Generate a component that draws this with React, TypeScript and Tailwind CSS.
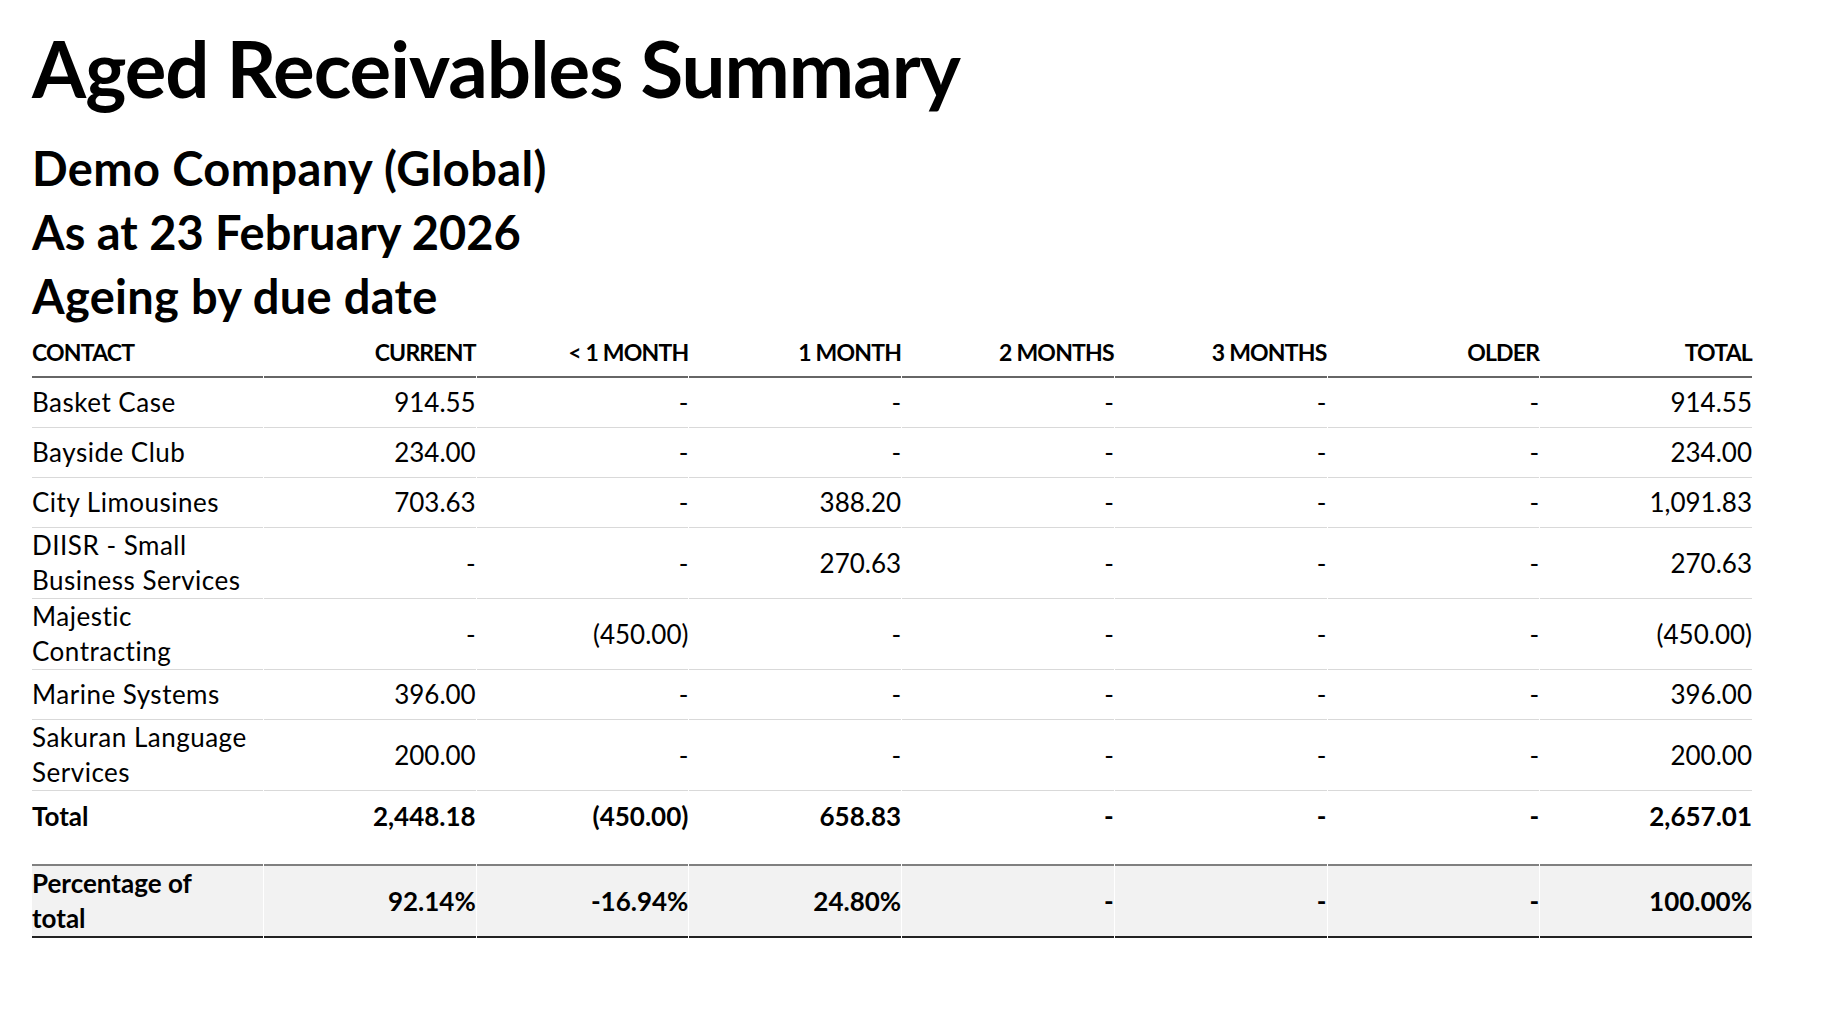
import React from 'react';

type Row = { contact: string[]; values: string[] };

const columns = ['Current', '< 1 Month', '1 Month', '2 Months', '3 Months', 'Older', 'Total'];

const rows: Row[] = [
  { contact: ['Basket Case'], values: ['914.55', '-', '-', '-', '-', '-', '914.55'] },
  { contact: ['Bayside Club'], values: ['234.00', '-', '-', '-', '-', '-', '234.00'] },
  { contact: ['City Limousines'], values: ['703.63', '-', '388.20', '-', '-', '-', '1,091.83'] },
  { contact: ['DIISR - Small', 'Business Services'], values: ['-', '-', '270.63', '-', '-', '-', '270.63'] },
  { contact: ['Majestic', 'Contracting'], values: ['-', '(450.00)', '-', '-', '-', '-', '(450.00)'] },
  { contact: ['Marine Systems'], values: ['396.00', '-', '-', '-', '-', '-', '396.00'] },
  { contact: ['Sakuran Language', 'Services'], values: ['200.00', '-', '-', '-', '-', '-', '200.00'] },
];

const totals = ['2,448.18', '(450.00)', '658.83', '-', '-', '-', '2,657.01'];
const percentages = ['92.14%', '-16.94%', '24.80%', '-', '-', '-', '100.00%'];

function Lines({ parts }: { parts: string[] }) {
  return (
    <>
      {parts.map((p, i) => (
        <React.Fragment key={i}>
          {i > 0 && <br />}
          {p}
        </React.Fragment>
      ))}
    </>
  );
}

export default function App() {
  return (
    <div className="min-h-screen bg-white pl-[32px] pt-[21px] text-black font-['Lato','Liberation_Sans',sans-serif]">
      <h1 className="text-[78px] leading-[94px] font-bold tracking-[-1px]">Aged Receivables Summary</h1>

      <div className="mt-[21px] text-[47px] leading-[64px] font-bold">
        <h2 className="tracking-[0.4px]">Demo Company (Global)</h2>
        <h2>As at 23 February 2026</h2>
        <h2 className="tracking-[0.3px]">Ageing by due date</h2>
      </div>

      {/* Report table */}
      <table className="ml-[-1px] w-[1722px] table-fixed border-separate [border-spacing:1px_0]">
        <colgroup>
          <col className="w-[231px]" />
          {columns.map((c) => (
            <col key={c} />
          ))}
        </colgroup>
        <thead>
          <tr>
            <th className="h-[50px] p-0 text-left align-middle text-[23px] leading-[35px] font-bold uppercase tracking-[-0.8px] border-b-2 border-[#666666]">
              Contact
            </th>
            {columns.map((c) => (
              <th
                key={c}
                className="h-[50px] p-0 text-right align-middle text-[23px] leading-[35px] font-bold uppercase tracking-[-0.8px] border-b-2 border-[#666666]"
              >
                {c}
              </th>
            ))}
          </tr>
        </thead>
        <tbody className="text-[26px] leading-[35px]">
          {rows.map((row) => (
            <tr key={row.contact.join(' ')}>
              <td className="h-[50px] p-0 text-left align-middle tracking-[0.5px] border-b border-[#d9d9d9]">
                <Lines parts={row.contact} />
              </td>
              {row.values.map((v, i) => (
                <td key={i} className="h-[50px] p-0 text-right align-middle border-b border-[#d9d9d9]">
                  {v}
                </td>
              ))}
            </tr>
          ))}
          <tr className="font-bold">
            <td className="h-[50px] p-0 text-left align-middle">Total</td>
            {totals.map((v, i) => (
              <td key={i} className="h-[50px] p-0 text-right align-middle">
                {v}
              </td>
            ))}
          </tr>
          <tr>
            <td colSpan={8} className="h-[23px] p-0"></td>
          </tr>
          <tr className="font-bold">
            <td className="h-[66px] p-0 text-left align-middle bg-[#f2f2f2] border-t-2 border-b-2 border-t-[#808080] border-b-[#222222]">
              Percentage of
              <br />
              total
            </td>
            {percentages.map((v, i) => (
              <td
                key={i}
                className="h-[66px] p-0 text-right align-middle bg-[#f2f2f2] border-t-2 border-b-2 border-t-[#808080] border-b-[#222222]"
              >
                {v}
              </td>
            ))}
          </tr>
        </tbody>
      </table>
    </div>
  );
}
